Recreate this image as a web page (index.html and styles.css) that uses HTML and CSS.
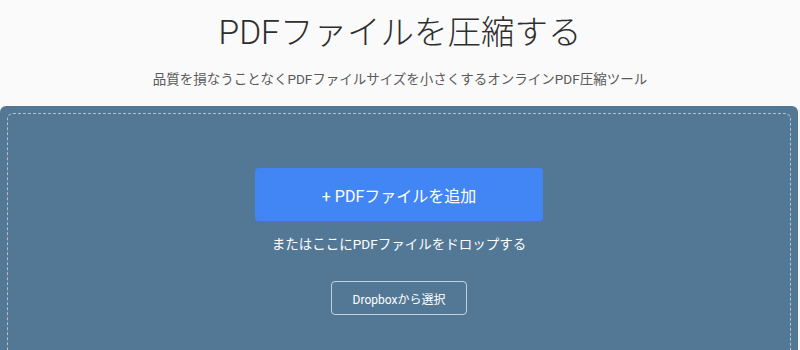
FILE: index.html
```html
<!DOCTYPE html>
<html lang="ja">
<head>
    <meta charset="UTF-8">
    <meta name="viewport" content="width=device-width, initial-scale=1.0">
    <title>PDFファイルを圧縮する</title>
    <link rel="stylesheet" href="styles.css">
</head>
<body>
    <header class="header">
        <h1 class="title">PDFファイルを圧縮する</h1>
        <p class="subtitle">品質を損なうことなくPDFファイルサイズを小さくするオンラインPDF圧縮ツール</p>
    </header>

    <!-- アップロード領域 -->
    <section class="upload">
        <div class="dropzone">
            <button class="add-btn">+ PDFファイルを追加</button>
            <p class="drop-text">またはここにPDFファイルをドロップする</p>
            <button class="dropbox-btn">Dropboxから選択</button>
        </div>
    </section>
</body>
</html>
```

FILE: styles.css
```css
body {
    margin: 0;
    background: #fafafa;
    font-family: Roboto, 'Noto Sans CJK JP', sans-serif;
    color: #333;
}

.header {
    text-align: center;
    padding-top: 13px;
    height: 93px;
}

.title {
    margin: 0;
    font-size: 33.5px;
    font-weight: 300;
    line-height: 40px;
    color: #2e2e2e;
}

.subtitle {
    margin: 16px 0 0;
    font-size: 13.5px;
    font-weight: 400;
    line-height: 20px;
    color: #5a5a5a;
}

.upload {
    margin-right: 2px;
    height: 244px;
    background: #537896;
    border-radius: 6px 6px 0 0;
    padding: 7px 7px 0;
}

.dropzone {
    height: 100%;
    border: 1px dashed rgba(255, 255, 255, 0.55);
    border-bottom: none;
    border-radius: 6px 6px 0 0;
    display: flex;
    flex-direction: column;
    align-items: center;
    padding-top: 54px;
    box-sizing: border-box;
}

.add-btn {
    width: 288px;
    height: 53px;
    background: #4286f5;
    border: none;
    border-radius: 4px;
    color: #fff;
    font-family: inherit;
    font-size: 16px;
    cursor: pointer;
}

.drop-text {
    margin: 14px 0 0;
    font-size: 13.5px;
    line-height: 18px;
    color: #fff;
}

.dropbox-btn {
    margin-top: 28px;
    width: 136px;
    height: 34px;
    background: transparent;
    border: 1px solid rgba(255, 255, 255, 0.65);
    border-radius: 4px;
    color: #fff;
    font-family: inherit;
    font-size: 12px;
    cursor: pointer;
}
```
